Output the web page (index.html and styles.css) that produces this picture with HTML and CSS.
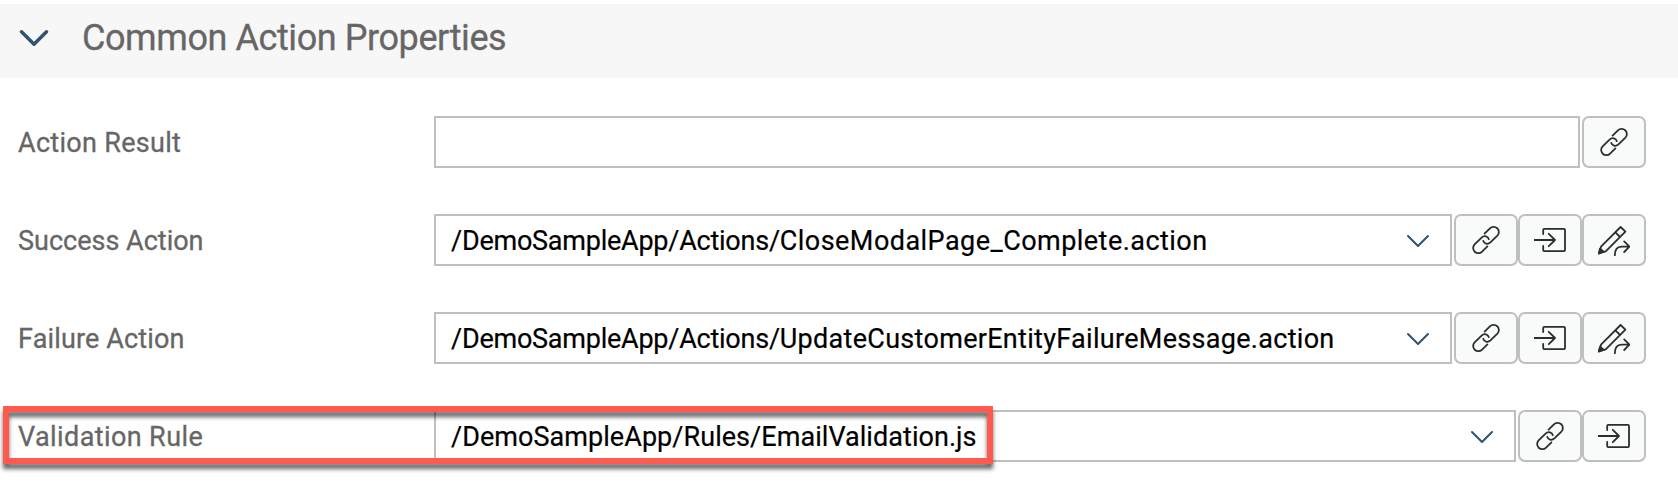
FILE: index.html
```
<!DOCTYPE html>
<html lang="en">
<head>
<meta charset="utf-8">
<title>Common Action Properties</title>
<link rel="stylesheet" href="styles.css">
</head>
<body>
<svg class="sprite" aria-hidden="true">
  <symbol id="link" viewBox="0 0 32 32">
    <path d="M14.6 9.6L19.9 4.4A5 5 0 0 1 27.4 11.6L20.4 18.4C17.6 21 14 19.6 13.2 16.8"/>
    <path d="M17.4 22.4L12.1 27.6A5 5 0 0 1 4.6 20.4L11.6 13.6C14.4 11 18 12.4 18.8 15.2"/>
  </symbol>
  <symbol id="enter" viewBox="0 0 32 32">
    <path d="M9.2 10V5.9Q9.2 4.9 10.2 4.9H30Q31 4.9 31 5.9V26.1Q31 27.1 30 27.1H10.2Q9.2 27.1 9.2 26.1V22M0 16H21M14.8 9.8L21 16L14.8 22.2"/>
  </symbol>
  <symbol id="edit" viewBox="0 0 32 32">
    <path d="M1.4 28.8L3 22.7L22.6 3L27.4 7.7L7.7 27.3ZM17.4 8.3L22.1 13"/>
    <path class="fill" d="M.6 29.7L2.1 24.6L5.8 28Z"/>
    <path d="M16.8 31.4C16.8 26 19 22.9 23.5 22.7H31M26.2 17.4L31.4 22.7L26.2 28"/>
  </symbol>
  <symbol id="chevron" viewBox="0 0 24 14">
    <path d="M2 2L12 12L22 2"/>
  </symbol>
</svg>
<main class="panel">
  <header class="panel-header">
    <svg class="toggle"><use href="#chevron"/></svg>
    <h1 class="title">Common Action Properties</h1>
  </header>
  <section class="form">
    <div class="row">
      <span class="label l-result">Action Result</span>
      <div class="field"></div>
      <div class="buttons">
        <button class="btn"><svg class="icon"><use href="#link"/></svg></button>
      </div>
    </div>
    <div class="row">
      <span class="label">Success Action</span>
      <div class="field"><span class="value v-success"><span class="dir">/DemoSampleApp/Actions/</span>CloseModalPage_Complete.action</span><svg class="arrow"><use href="#chevron"/></svg></div>
      <div class="buttons">
        <button class="btn"><svg class="icon"><use href="#link"/></svg></button>
        <button class="btn"><svg class="icon"><use href="#enter"/></svg></button>
        <button class="btn"><svg class="icon"><use href="#edit"/></svg></button>
      </div>
    </div>
    <div class="row">
      <span class="label l-failure">Failure Action</span>
      <div class="field"><span class="value v-failure"><span class="dir">/DemoSampleApp/Actions/</span>UpdateCustomerEntityFailureMessage.action</span><svg class="arrow"><use href="#chevron"/></svg></div>
      <div class="buttons">
        <button class="btn"><svg class="icon"><use href="#link"/></svg></button>
        <button class="btn"><svg class="icon"><use href="#enter"/></svg></button>
        <button class="btn"><svg class="icon"><use href="#edit"/></svg></button>
      </div>
    </div>
    <div class="row">
      <span class="label l-rule">Validation Rule</span>
      <div class="field"><span class="value v-rule">/DemoSampleApp/Rules/EmailValidation.js</span><svg class="arrow"><use href="#chevron"/></svg></div>
      <div class="buttons">
        <button class="btn"><svg class="icon"><use href="#link"/></svg></button>
        <button class="btn"><svg class="icon"><use href="#enter"/></svg></button>
      </div>
      <div class="highlight"></div>
    </div>
  </section>
</main>
</body>
</html>
```
FILE: styles.css
```
* { box-sizing: border-box; }
body {
  margin: 0;
  background: #fff;
  font-family: Roboto, "Liberation Sans", sans-serif;
}
.sprite { display: none; }
svg { fill: none; stroke-linecap: round; stroke-linejoin: round; }
.panel { min-height: 488px; padding-top: 4px; }
.panel-header {
  display: flex;
  align-items: center;
  height: 74px;
  padding: 0 0 8px 19px;
  background: #f7f7f7;
  border-top: 1px solid #f4f4f4;
}
.toggle {
  width: 30px;
  height: 18px;
  margin-right: 33px;
  stroke: #2f5373;
  stroke-width: 2.8;
}
.title {
  margin: 0;
  font-size: 36px;
  font-weight: 400;
  line-height: 44px;
  letter-spacing: -.42px;
  color: #666;
  -webkit-text-stroke: .3px #666;
  white-space: nowrap;
}
.form {
  display: flex;
  flex-direction: column;
  gap: 46px;
  padding: 38px 32px 0 18px;
}
.row {
  position: relative;
  display: flex;
  height: 52px;
}
.label {
  flex: 0 0 416px;
  padding-top: 1px;
  font-size: 27px;
  line-height: 52px;
  color: #666;
  -webkit-text-stroke: .3px #666;
  white-space: nowrap;
}
.l-result { letter-spacing: .3px; }
.l-failure { letter-spacing: .15px; }
.l-rule { letter-spacing: .4px; }
.field {
  flex: 1;
  display: flex;
  align-items: center;
  justify-content: space-between;
  padding: 0 20px 0 15px;
  border: 2px solid #bfbfbf;
  background: #fff;
}
.value {
  padding-top: 2px;
  font-size: 27px;
  line-height: 46px;
  color: #000;
  -webkit-text-stroke: .2px #000;
  white-space: nowrap;
}
.dir { letter-spacing: -.24px; }
.v-success { letter-spacing: .46px; }
.v-failure { letter-spacing: .3px; }
.v-rule { letter-spacing: .05px; }
.arrow {
  width: 24px;
  height: 14px;
  margin-top: 2px;
  stroke: #2f5373;
  stroke-width: 2;
}
.buttons { display: flex; margin-left: 2px; }
.btn {
  display: flex;
  align-items: center;
  justify-content: center;
  width: 64px;
  height: 52px;
  padding: 0;
  border: 2px solid #bfbfbf;
  border-radius: 7px;
  background: #f9fbfb;
}
.icon {
  width: 32px;
  height: 32px;
  stroke: #2d2d2d;
  stroke-width: 1.8;
  overflow: visible;
}
.fill { fill: #2d2d2d; }
/* Callout frame drawn over the row */
.highlight {
  position: absolute;
  left: -15px;
  top: -4px;
  width: 990px;
  height: 58px;
  border: 6px solid #ff5a4d;
  filter: drop-shadow(0 5px 2px rgba(0, 0, 0, .6));
}
```
